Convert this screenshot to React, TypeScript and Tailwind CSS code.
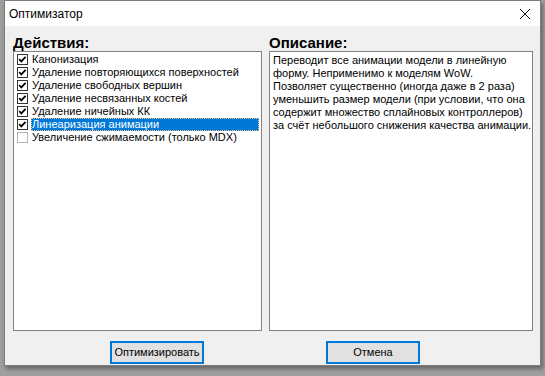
import React from "react";

const items: { label: string; checked: boolean; selected?: boolean }[] = [
  { label: "Канонизация", checked: true },
  { label: "Удаление повторяющихся поверхностей", checked: true },
  { label: "Удаление свободных вершин", checked: true },
  { label: "Удаление несвязанных костей", checked: true },
  { label: "Удаление ничейных КК", checked: true },
  { label: "Линеаризация анимации", checked: true, selected: true },
  { label: "Увеличение сжимаемости (только MDX)", checked: false },
];

const descLines = [
  "Переводит все анимации модели в линейную",
  "форму. Неприменимо к моделям WoW.",
  "Позволяет существенно (иногда даже в 2 раза)",
  "уменьшить размер модели (при условии, что она",
  "содержит множество сплайновых контроллеров)",
  "за счёт небольшого снижения качества анимации.",
];

function CheckBox({ checked }: { checked: boolean }) {
  return (
    <svg width="11" height="11" viewBox="0 0 11 11" className="shrink-0">
      <rect
        x="0.5"
        y="0.5"
        width="10"
        height="10"
        fill="#ffffff"
        stroke={checked ? "#333333" : "#b4b4b4"}
      />
      {checked && (
        <polyline
          points="2.2,5.2 4.3,7.4 8.6,2.8"
          fill="none"
          stroke="#000000"
          strokeWidth="1.7"
        />
      )}
    </svg>
  );
}

export default function App() {
  const font = { fontFamily: '"Liberation Sans", Arial, sans-serif' };
  return (
    <div
      className="w-[545px] h-[376px] bg-[#9e9e9e] overflow-hidden"
      style={font}
    >
      <div className="ml-[4px] w-[537px] h-[366px] flex flex-col border border-[#7c7c7c] shadow-[2px_3px_4px_rgba(0,0,0,0.35)]">
        {/* title bar */}
        <div className="h-[25px] bg-white flex items-center shrink-0">
          <span className="ml-[4px] text-[12px] leading-[14px] text-black">
            Оптимизатор
          </span>
          <div className="flex-1" />
          <svg width="12" height="12" viewBox="0 0 12 12" className="mr-[9px]">
            <path d="M1 1 L11 11 M11 1 L1 11" stroke="#111" strokeWidth="1" />
          </svg>
        </div>
        {/* body */}
        <div className="flex-1 bg-[#f0f0f0] flex flex-col pl-[8px] pt-[9px]">
          <div className="flex gap-[7px]">
            <div className="w-[249px] flex flex-col">
              <div className="h-[16px] text-[15px] leading-[16px] font-bold text-black">
                Действия:
              </div>
              <div className="h-[280px] bg-white border border-[#828282] pt-[1px]">
                {items.map((it, i) => (
                  <div key={i} className="h-[13px] flex items-center pl-[3px] pr-[2px]">
                    <CheckBox checked={it.checked} />
                    <div
                      className={
                        "ml-[3px] flex-1 h-[13px] flex items-center pl-[1px] text-[11px] leading-[13px] whitespace-nowrap " +
                        (it.selected
                          ? "bg-[#0078d7] text-white outline outline-1 outline-dotted outline-[#f4c27a] -outline-offset-1"
                          : "text-black")
                      }
                    >
                      {it.label}
                    </div>
                  </div>
                ))}
              </div>
            </div>
            <div className="w-[264px] flex flex-col">
              <div className="h-[16px] text-[15px] leading-[16px] font-bold text-black">
                Описание:
              </div>
              <div className="h-[280px] bg-white border border-[#828282] pt-[2px] pl-[3px]">
                {descLines.map((l, i) => (
                  <div key={i} className="text-[11px] leading-[13px] text-black whitespace-nowrap">
                    {l}
                  </div>
                ))}
              </div>
            </div>
          </div>
          <div className="flex mt-[10px]">
            <button className="ml-[97px] w-[94px] h-[23px] bg-[#e1e1e1] border-2 border-[#0078d7] text-[11px] leading-[13px] text-black flex items-center justify-center">
              Оптимизировать
            </button>
            <button className="ml-[122px] w-[94px] h-[23px] bg-[#e1e1e1] border-2 border-[#0078d7] text-[11px] leading-[13px] text-black flex items-center justify-center">
              Отмена
            </button>
          </div>
        </div>
      </div>
    </div>
  );
}
